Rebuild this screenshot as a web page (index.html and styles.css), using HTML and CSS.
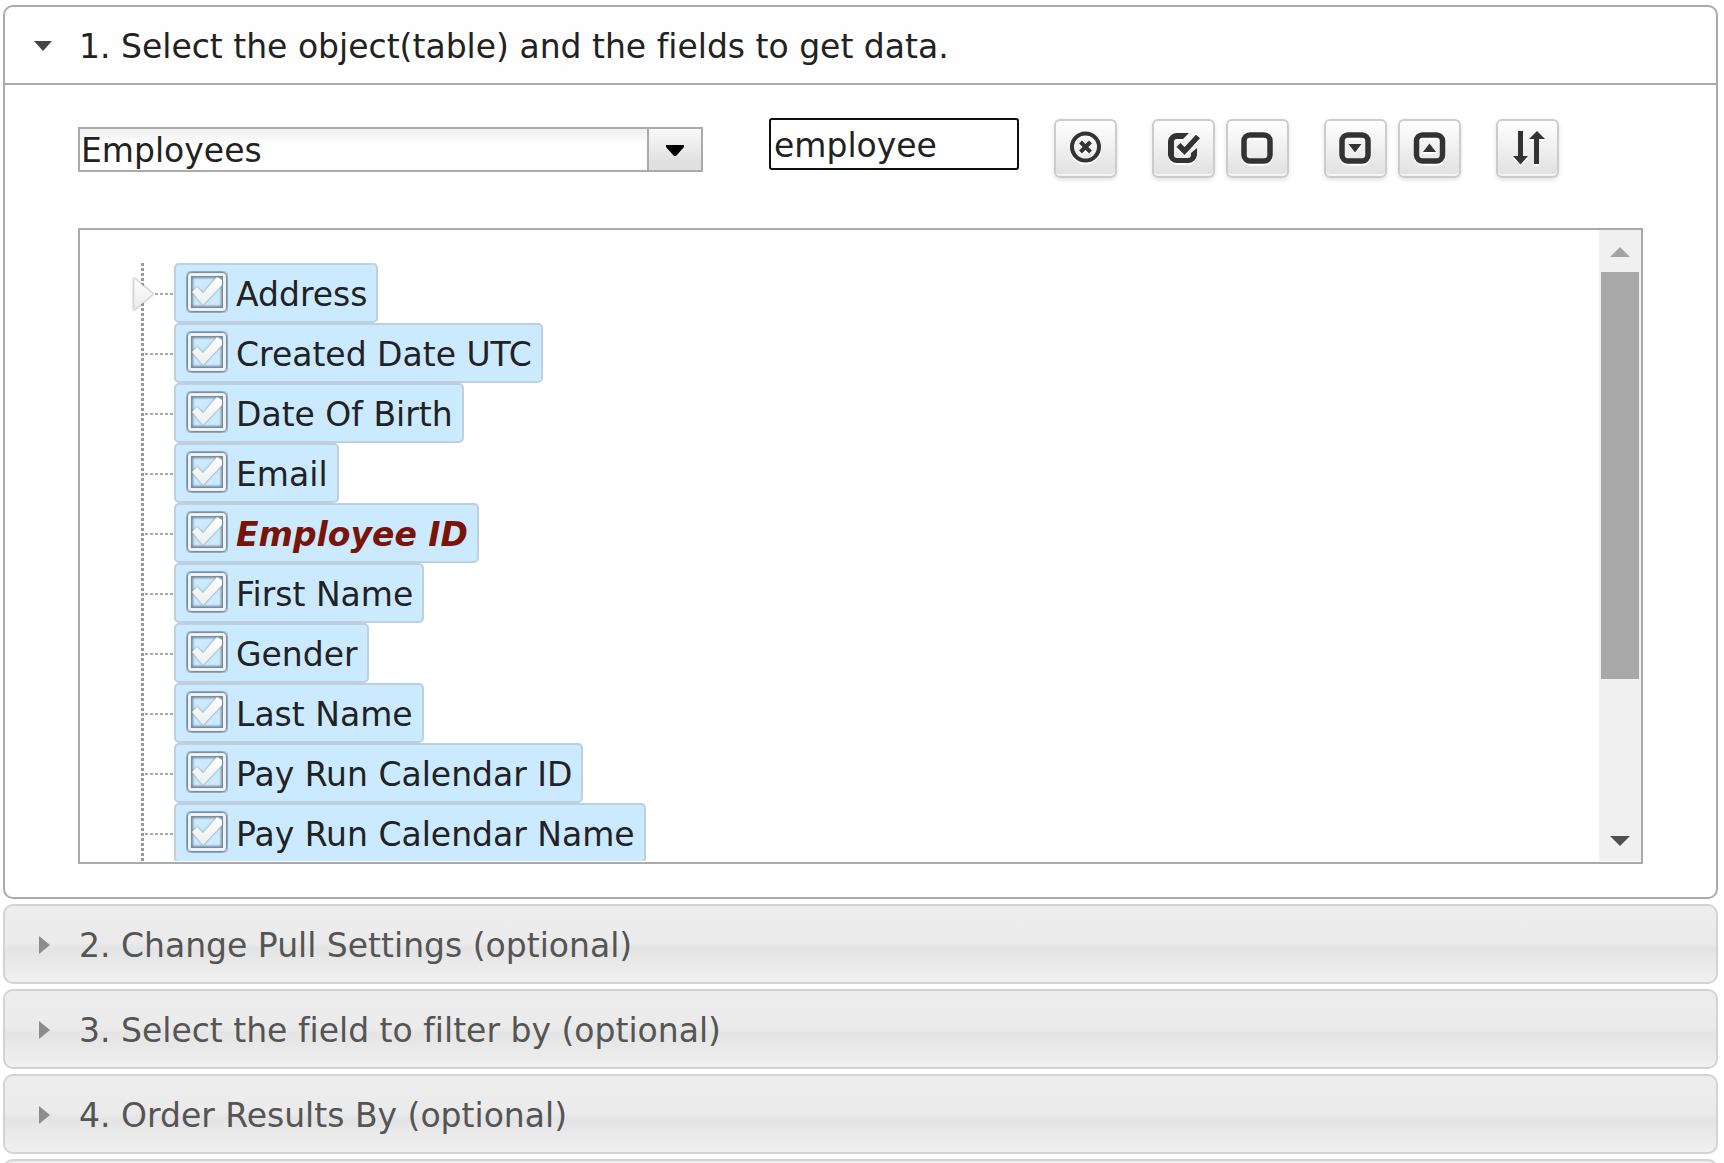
FILE: index.html
```html
<!DOCTYPE html>
<html lang="en">
<head>
<meta charset="utf-8">
<title>Get Data</title>
<link rel="stylesheet" href="styles.css">
</head>
<body>
<main class="accordion">
  <section class="section">
    <h3 class="heading"><button type="button" class="header header-open" aria-expanded="true"><svg class="marker" viewBox="0 0 18 18"><path d="M0 4h18l-9 10z" fill="#454545"/></svg><span>1. Select the object(table) and the fields to get data.</span></button></h3>
    <div class="panel">
      <div class="toolbar">
        <div class="picker">
          <select class="picker-select" aria-label="Object"><option>Employees</option></select>
          <span class="picker-arrow"><svg width="18" height="12" viewBox="0 0 18 12"><path d="M0 0h18v2l-8 9h-2l-8-9z" fill="#000"/></svg></span>
        </div>
        <input class="search" type="text" value="employee" aria-label="Search fields">
        <div class="group">
          <button type="button" class="tool" aria-label="Clear"><svg viewBox="0 0 34 34"><circle cx="16.500" cy="16" r="13.500" fill="none" stroke="#333" stroke-width="4"/><path d="M11.500 11l10 10M21.500 11l-10 10" stroke="#333" stroke-width="4"/></svg></button>
        </div>
        <div class="group">
          <button type="button" class="tool" aria-label="Check all"><svg viewBox="0 0 34 34"><path d="M22 2H10a9 9 0 0 0-9 8V24a9 9 0 0 0 9 8H21a9 9 0 0 0 9-8V17l-6 5V24a3 3 0 0 1-3 3H10a3 3 0 0 1-3-3V11a3 3 0 0 1 3-3H16z" fill="#333"/><path d="M11.500 14l6 6L31 5.500" fill="none" stroke="#333" stroke-width="5.500"/></svg></button>
          <button type="button" class="tool" aria-label="Uncheck all"><svg viewBox="0 0 34 34"><rect x="3" y="4" width="26" height="26" rx="6" fill="none" stroke="#333" stroke-width="5.500"/></svg></button>
        </div>
        <div class="group">
          <button type="button" class="tool" aria-label="Expand all"><svg viewBox="0 0 34 34"><rect x="3" y="4" width="26" height="26" rx="6" fill="none" stroke="#333" stroke-width="5.500"/><path d="M9.500 13h13L16 21.500z" fill="#333"/></svg></button>
          <button type="button" class="tool" aria-label="Collapse all"><svg viewBox="0 0 34 34"><rect x="3.500" y="4" width="26" height="26" rx="6" fill="none" stroke="#333" stroke-width="5.500"/><path d="M10 21h13L16.500 12.500z" fill="#333"/></svg></button>
        </div>
        <div class="group">
          <button type="button" class="tool" aria-label="Sort"><svg viewBox="0 0 34 34"><path d="M7 0h5v25h5L9.500 33.500 2 25h5zM23 33V8h-5L26 0l8 8h-6v25z" fill="#333"/></svg></button>
        </div>
      </div>
      <div class="tree-box">
        <ul class="tree">
          <li class="node"><button type="button" class="expander" aria-label="Expand Address"><svg width="26" height="36" viewBox="0 0 26 36"><defs><linearGradient id="fade" x2="0" y2="1"><stop stop-color="#fff"/><stop offset="1" stop-color="#eaeaea"/></linearGradient></defs><path d="M3 2v32l19-16z" fill="url(#fade)" stroke="#ddd"/></svg></button><label class="field"><input type="checkbox" class="check" checked><span>Address</span></label></li>
          <li class="node"><label class="field"><input type="checkbox" class="check" checked><span>Created Date UTC</span></label></li>
          <li class="node"><label class="field"><input type="checkbox" class="check" checked><span>Date Of Birth</span></label></li>
          <li class="node"><label class="field"><input type="checkbox" class="check" checked><span>Email</span></label></li>
          <li class="node"><label class="field field-key"><input type="checkbox" class="check" checked><span>Employee ID</span></label></li>
          <li class="node"><label class="field"><input type="checkbox" class="check" checked><span>First Name</span></label></li>
          <li class="node"><label class="field"><input type="checkbox" class="check" checked><span>Gender</span></label></li>
          <li class="node"><label class="field"><input type="checkbox" class="check" checked><span>Last Name</span></label></li>
          <li class="node"><label class="field"><input type="checkbox" class="check" checked><span>Pay Run Calendar ID</span></label></li>
          <li class="node"><label class="field"><input type="checkbox" class="check" checked><span>Pay Run Calendar Name</span></label></li>
        </ul>
        <div class="scrollbar">
          <button type="button" class="scroll-button" aria-label="Scroll up"><svg width="20" height="10" viewBox="0 0 20 10"><path d="M0 10L10 0l10 10z" fill="#a3a3a3"/></svg></button>
          <div class="scroll-track"><div class="scroll-thumb"></div></div>
          <button type="button" class="scroll-button" aria-label="Scroll down"><svg width="20" height="10" viewBox="0 0 20 10"><path d="M0 0h20L10 10z" fill="#505050"/></svg></button>
        </div>
      </div>
    </div>
  </section>
  <h3 class="heading"><button type="button" class="header" aria-expanded="false"><svg class="marker" viewBox="0 0 18 18"><path d="M5 0v18l11-9z" fill="#8c8c8c"/></svg><span>2. Change Pull Settings (optional)</span></button></h3>
  <h3 class="heading"><button type="button" class="header" aria-expanded="false"><svg class="marker" viewBox="0 0 18 18"><path d="M5 0v18l11-9z" fill="#8c8c8c"/></svg><span>3. Select the field to filter by (optional)</span></button></h3>
  <h3 class="heading"><button type="button" class="header" aria-expanded="false"><svg class="marker" viewBox="0 0 18 18"><path d="M5 0v18l11-9z" fill="#8c8c8c"/></svg><span>4. Order Results By (optional)</span></button></h3>
  <div class="header"></div>
</main>
</body>
</html>
```
FILE: styles.css
```css
* {
  box-sizing: border-box;
}

body {
  margin: 0;
  height: 100vh;
  overflow: hidden;
  background: #fff;
  color: #222;
  font-family: Verdana, "DejaVu Sans", sans-serif;
  font-size: 33px;
  font-variant-ligatures: none;
}

button,
input,
select {
  font: inherit;
  font-variant-ligatures: none;
  color: inherit;
}

.accordion {
  display: flex;
  flex-direction: column;
  gap: 5px;
  padding: 5px 6px 0 3px;
}

.heading {
  margin: 0;
  font: inherit;
}

.header {
  display: flex;
  align-items: center;
  gap: 27px;
  width: 100%;
  height: 80px;
  padding: 2px 28px 0 29px;
  border: 2px solid #d3d3d3;
  border-radius: 10px;
  background: linear-gradient(#ededed, #ebebeb 48%, #e4e4e4 56%, #f0f0f0);
  color: #555;
  text-align: left;
}

.header-open {
  border-color: #aaa;
  border-radius: 10px 10px 0 0;
  background: #fefefe;
  color: #222;
}

.marker {
  flex: none;
  width: 18px;
  height: 18px;
}

.panel {
  padding: 33px 73px;
  border: 2px solid #aaa;
  border-top: 0;
  border-radius: 0 0 10px 10px;
}

.toolbar {
  display: flex;
  gap: 35px;
  height: 60px;
}

.picker {
  display: flex;
  width: 625px;
  height: 45px;
  margin: 9px 31px 0 0;
  border: 2px solid #aaa;
}

.picker-select {
  flex: 1;
  min-width: 0;
  padding: 2px 0 0 1px;
  border: 0;
  appearance: none;
  background: linear-gradient(#eee, #fff 16px);
}

.picker-arrow {
  display: flex;
  align-items: center;
  justify-content: center;
  width: 54px;
  padding-top: 2px;
  border-left: 2px solid #aaa;
  background: linear-gradient(#fafafa, #e0e0e0 80%);
}

.search {
  width: 250px;
  height: 52px;
  padding: 2px 3px 0;
  border: 2px solid #101010;
  border-radius: 3px;
  outline: 0;
  background: #fff;
}

.group {
  display: flex;
  gap: 11px;
}

.tool {
  width: 63px;
  height: 59px;
  margin-top: 1px;
  padding: 0 0 2px;
  border: 2px solid #ccc;
  border-radius: 6px;
  background: linear-gradient(#fff, #e0e0e0);
  box-shadow: inset 0 -2px 0 #f4f4f4, 0 2px 4px rgba(0, 0, 0, .12);
}

.tool svg {
  display: block;
  width: 34px;
  height: 34px;
  margin: 0 auto;
  filter: drop-shadow(0 2px 0 #fff);
}

.tree-box {
  display: flex;
  height: 636px;
  margin-top: 50px;
  padding-bottom: 1px;
  border: 2px solid #aaa;
}

.tree {
  flex: 1;
  margin: 0;
  padding: 33px 0 0 61px;
  overflow: hidden;
  list-style: none;
}

.node {
  position: relative;
  display: flex;
  height: 60px;
  padding-left: 33px;
  background:
    repeating-linear-gradient(#999 0 3px, transparent 3px 5px) 0 0 / 3px 100% no-repeat,
    repeating-linear-gradient(90deg, #aaa 0 3px, transparent 3px 5px) 4px 30px / 29px 2px no-repeat;
}

.expander {
  position: absolute;
  top: 13px;
  left: -10px;
  padding: 0;
  border: 0;
  background: none;
}

.expander svg {
  display: block;
  filter: drop-shadow(0 0 1px rgba(0, 0, 0, .4));
}

.field {
  display: flex;
  align-items: center;
  gap: 8px;
  padding: 2px 9px 0 10px;
  border: 2px solid #bcd0dd;
  border-radius: 5px;
  background: #cceaff;
  white-space: nowrap;
}

.field-key {
  color: #7a1408;
  font-weight: bold;
  font-style: italic;
}

.check {
  flex: none;
  width: 42px;
  height: 42px;
  margin: 0 0 4px;
  appearance: none;
  background: url("data:image/svg+xml,%3Csvg xmlns='http://www.w3.org/2000/svg' viewBox='0 0 42 42'%3E%3Cdefs%3E%3Cfilter id='b'%3E%3CfeGaussianBlur stdDeviation='1'/%3E%3C/filter%3E%3ClinearGradient id='g' x2='0' y2='1'%3E%3Cstop stop-color='%23fff'/%3E%3Cstop offset='1' stop-color='%23eceded'/%3E%3C/linearGradient%3E%3C/defs%3E%3Crect x='3.500' y='3.500' width='35' height='35' rx='3' fill='none' stroke='%236f8696' stroke-width='7' filter='url(%23b)'/%3E%3Crect x='3.500' y='3.500' width='35' height='35' rx='2' fill='none' stroke='%23f0f1f2' stroke-width='3'/%3E%3Cpath d='M6 21l5-5 6 6L31 6l5 3v5L17 34z' fill='%236f8696' filter='url(%23b)'/%3E%3Cpath d='M6 21l5-5 6 6L31 6l5 3v5L17 34z' fill='url(%23g)'/%3E%3C/svg%3E") center / 42px no-repeat;
}

.scrollbar {
  display: flex;
  flex-direction: column;
  width: 42px;
  background: #f0f0f0;
}

.scroll-button {
  display: flex;
  align-items: center;
  justify-content: center;
  height: 42px;
  padding: 1px 0 0;
  border: 0;
  background: none;
}

.scroll-track {
  flex: 1;
  padding: 0 2px;
}

.scroll-thumb {
  height: 407px;
  background: #a8a8a8;
}
```
